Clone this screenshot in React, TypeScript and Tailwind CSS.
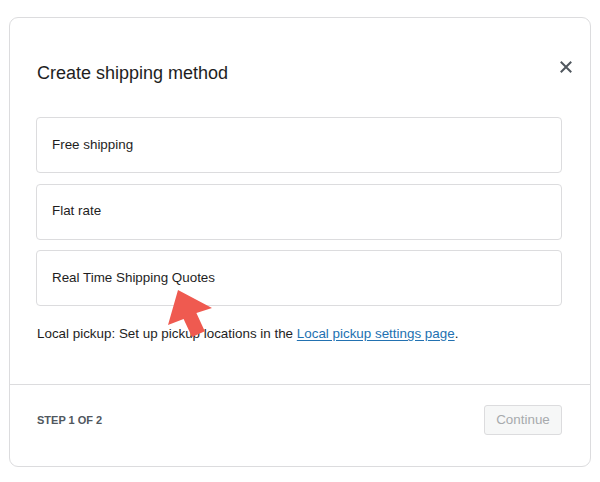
import React from 'react';

const options = ['Free shipping', 'Flat rate', 'Real Time Shipping Quotes'];

export default function App() {
  return (
    <div
      className="relative w-[600px] h-[482px] bg-white pt-[17px] pl-[9px] text-[#1e1e1e]"
      style={{ fontFamily: '"Liberation Sans", Arial, sans-serif' }}
    >
      {/* modal */}
      <div className="relative w-[582px] h-[450px] border border-[#dcdcde] rounded-[9px] flex flex-col bg-white">
        <button className="absolute right-[18px] top-[43px] w-[12px] h-[12px] text-[#50575e]" aria-label="Close">
          <svg viewBox="0 0 12 12" className="w-[12px] h-[12px]">
            <path d="M1.5 1.5 L10.5 10.5 M10.5 1.5 L1.5 10.5" stroke="currentColor" strokeWidth="2" strokeLinecap="square" />
          </svg>
        </button>

        <div className="flex-1 pl-[26px] pr-[28px] pt-[43px]">
          <h1 className="text-[18px] leading-6 font-normal pl-px">Create shipping method</h1>

          <div className="mt-[32px] flex flex-col gap-[10.5px]">
            {options.map((o) => (
              <div
                key={o}
                className="h-[56px] border border-[#dcdcde] rounded-[4px] flex items-center px-[15px] text-[13.4px]"
              >
                {o}
              </div>
            ))}
          </div>

          <p className="mt-[18px] text-[13.4px] leading-5 pl-px">
            Local pickup: Set up pickup locations in the{' '}
            <a href="#" className="text-[#2271b1] underline underline-offset-2">
              Local pickup settings page
            </a>
            .
          </p>
        </div>

        {/* footer */}
        <div className="h-[82px] border-t border-[#dcdcde] flex items-start justify-between pl-[27px] pr-[28px] pt-[20px]">
          <span className="h-[30px] flex items-center text-[11px] font-semibold text-[#50575e]">
            STEP 1 OF 2
          </span>
          <button
            disabled
            className="h-[30px] w-[78px] border border-[#dcdcde] bg-[#f6f7f7] rounded-[3px] text-[13.4px] text-[#a7aaad]"
          >
            Continue
          </button>
        </div>
      </div>

      {/* annotation arrow */}
      <svg className="absolute left-[160px] top-[285px] w-[60px] h-[60px]" viewBox="0 0 60 60">
        <polygon
          points="18,5 52,23 36.4,28.1 44.8,46.3 32,52.1 23.6,33.9 8,40"
          fill="#ef5a50"
        />
      </svg>
    </div>
  );
}
